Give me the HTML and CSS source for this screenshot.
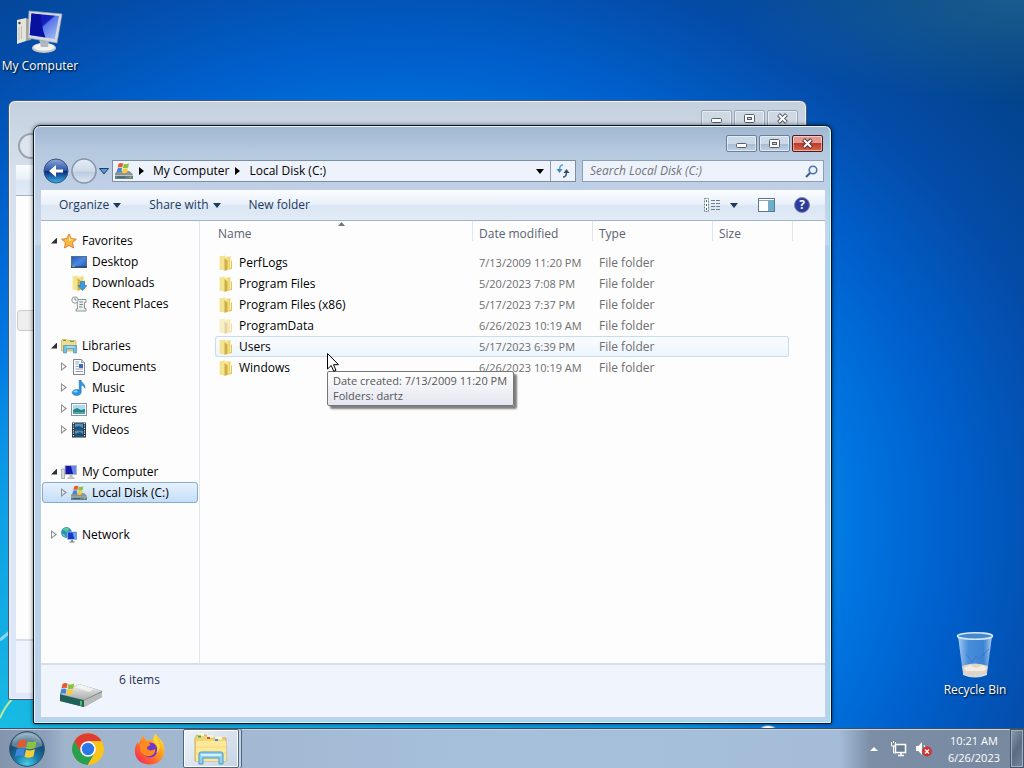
FILE: index.html
```html
<!DOCTYPE html>
<html lang="en">
<head>
  <meta charset="UTF-8">
  <meta name="viewport" content="width=device-width, initial-scale=1.0">
  <title>Local Disk (C:)</title>
  <link rel="stylesheet" href="styles.css">
</head>
<body>
  <!-- Icon sprite -->
  <svg class="sprite" aria-hidden="true">
    <defs>
      <linearGradient id="gScreen" x1="0" y1="0" x2="1" y2="1">
        <stop offset="0" stop-color="#0a14a8"/><stop offset=".45" stop-color="#1420c0"/><stop offset=".5" stop-color="#5a78e8"/><stop offset="1" stop-color="#a8c4fa"/>
      </linearGradient>
      <linearGradient id="gFolder" x1="0" y1="0" x2="1" y2="0">
        <stop offset="0" stop-color="#f8eca0"/><stop offset=".5" stop-color="#f0dc7c"/><stop offset="1" stop-color="#dcc050"/>
      </linearGradient>
      <linearGradient id="gDesk" x1="0" y1="0" x2="1" y2="1">
        <stop offset="0" stop-color="#1c54b8"/><stop offset=".5" stop-color="#4a88e0"/><stop offset="1" stop-color="#2058b8"/>
      </linearGradient>
      <linearGradient id="gGray" x1="0" y1="0" x2="0" y2="1">
        <stop offset="0" stop-color="#f4f4f4"/><stop offset="1" stop-color="#a8acac"/>
      </linearGradient>
      <linearGradient id="gBack" x1="0" y1="0" x2="0" y2="1">
        <stop offset="0" stop-color="#8fa8d8"/><stop offset=".48" stop-color="#2c55a8"/><stop offset=".52" stop-color="#0b2a80"/><stop offset="1" stop-color="#38b8e8"/>
      </linearGradient>
      <linearGradient id="gFwd" x1="0" y1="0" x2="0" y2="1">
        <stop offset="0" stop-color="#e6edf6"/><stop offset=".5" stop-color="#cfdaea"/><stop offset=".55" stop-color="#bccbe0"/><stop offset="1" stop-color="#dfe8f4"/>
      </linearGradient>
      <radialGradient id="gOrb" cx=".5" cy=".95" r=".9">
        <stop offset="0" stop-color="#48d0e8"/><stop offset=".4" stop-color="#1878a8"/><stop offset=".75" stop-color="#174a70"/><stop offset="1" stop-color="#7898b0"/>
      </radialGradient>
      <linearGradient id="gFox" x1="1" y1="0" x2="0" y2="1">
        <stop offset="0" stop-color="#fff04a"/><stop offset=".4" stop-color="#ff9a1e"/><stop offset=".75" stop-color="#ff4a3c"/><stop offset="1" stop-color="#f0186a"/>
      </linearGradient>
      <linearGradient id="gBin" x1="0" y1="0" x2="1" y2="0">
        <stop offset="0" stop-color="#c8e0f8" stop-opacity=".85"/><stop offset=".3" stop-color="#78b0ec" stop-opacity=".6"/><stop offset=".75" stop-color="#78b0ec" stop-opacity=".5"/><stop offset="1" stop-color="#d0e4f8" stop-opacity=".85"/>
      </linearGradient>
    </defs>

    <symbol id="flag" viewBox="0 0 20 18">
      <path d="M3 2.500Q6 .5 9.500 2L8.300 8Q5 6.500 1.500 8.400z" fill="#e8582c"/>
      <path d="M10.500 2.500Q14 4 18 2.200L16.800 8.200Q13 10 9.300 8.400z" fill="#8cc23c"/>
      <path d="M1.300 9.400Q5 7.600 8 9.200L6.900 15Q3.500 13.500 0 15.500z" fill="#3c88d8"/>
      <path d="M9.100 9.600Q13 11 16.600 9.300L15.400 15.300Q11.500 17 7.900 15.500z" fill="#f8cc38"/>
    </symbol>
    <symbol id="drive" viewBox="0 0 16 16">
      <path d="M0 10l2-2h11l3 3v4H0z" fill="#8c9498"/>
      <path d="M0 11.500h16V15H0z" fill="#6c7c80"/>
      <path d="M0 12h16" stroke="#c4ccd0" stroke-width=".8"/>
      <path d="M2 13.500h7" stroke="#2c6878"/><circle cx="13.500" cy="13.500" r=".7" fill="#7ce058"/>
      <use href="#flag" x="1" y="0" width="13" height="11"/>
    </symbol>
    <symbol id="star" viewBox="0 0 16 16">
      <path d="M8 .8l2.200 4.800 5.200.6-3.900 3.500 1.100 5.300L8 12.400 3.400 15l1.100-5.300L.6 6.200l5.200-.6z" fill="#fbb83c" stroke="#d8782c" stroke-width=".9"/>
      <path d="M8 3l1.500 3.400 3 .4L8 8z" fill="#fff0a8"/>
    </symbol>
    <symbol id="desk" viewBox="0 0 16 16">
      <rect x=".5" y="2.500" width="15" height="11" fill="url(#gDesk)" stroke="#5c6c88"/>
      <path d="M0 13h16" stroke="#203050"/><path d="M1 12.300h3" stroke="#58c868"/>
    </symbol>
    <symbol id="folder" viewBox="0 0 16 16">
      <path d="M1 1.500l6-1v15l-6-1z" fill="#f2e492"/>
      <path d="M7 1.500h6v4h1V14l-7 1.500z" fill="url(#gFolder)"/>
      <path d="M6.500 3l3 2.500V15l-3 .8z" fill="#cfae48"/>
      <path d="M1.500 1.800v12.400M12.500 2v11" stroke="#fffad0" stroke-width=".8"/>
    </symbol>
    <symbol id="download" viewBox="0 0 16 16">
      <use href="#folder" x="0" y="0" width="16" height="16"/>
      <path d="M9.500 6.500h4v4H16l-4.500 5L7 10.500h2.500z" fill="#3c9ce0" stroke="#2070b0" stroke-width=".6"/>
    </symbol>
    <symbol id="recent" viewBox="0 0 16 16">
      <path d="M6 3.500h9v3h-1.500v6H15V15H5v-2h1.500z" fill="#eef0f0" stroke="#8c9494"/>
      <path d="M8.500 6h3.500M8.500 8.500h3.500M8 11h3.500" stroke="#78888c"/>
      <circle cx="4" cy="4" r="3.200" fill="#f8f8f8" stroke="#909898"/><path d="M4 2v2h1.500" fill="none" stroke="#606868" stroke-width=".8"/>
    </symbol>
    <symbol id="library" viewBox="0 0 16 16">
      <path d="M.5 2.500l1-1h4l1 1h8l.5 1V13H.5z" fill="#f4dc84" stroke="#c8a850" stroke-width=".7"/>
      <path d="M2 2.500h3M9 3.500h4" stroke="#48a868"/>
      <path d="M2.500 15V7.500h13V15h-3v-4h-7v4z" fill="#6cc0e8" stroke="#3c88b8" stroke-width=".6"/>
      <path d="M5.500 9h8" stroke="#d8f4fc"/>
    </symbol>
    <symbol id="doc" viewBox="0 0 16 16">
      <path d="M2.500.500h8l3 3v12h-11z" fill="#fcfcfc" stroke="#788898"/>
      <path d="M4.500 3h4M4.500 5h3M4.500 7.500h3M4.500 10h7.500M4.500 12.500h7.500" stroke="#90a0b4"/><path d="M8 5h4v4H8z" fill="#3c68c0"/>
      <path d="M10.500.500v3h3" fill="#d0d8e0" stroke="#788898" stroke-width=".7"/>
    </symbol>
    <symbol id="music" viewBox="0 0 16 16">
      <path d="M8.200 0h1.700c.3 3 4.800 4 3.900 8.300-.8-2.200-2-2.800-3.600-3.200V12c0 2.200-1.800 3.500-4.400 3.500S1.200 14.500 1.200 12.600s2-3.200 4.400-3.200c1 0 2 .2 2.600.5z" fill="#2c94e0" stroke="#1c68b0" stroke-width=".5"/>
      <ellipse cx="4.500" cy="11.500" rx="2" ry="1" fill="#98d4f8"/>
    </symbol>
    <symbol id="picture" viewBox="0 0 16 16">
      <rect x=".5" y="2.500" width="15" height="12" fill="#fff" stroke="#8894a0"/>
      <path d="M2 4h12v9H2z" fill="#a8dcec"/><path d="M2 9l4-2 4 2 4-1v5H2z" fill="#2c8088"/><path d="M2 11h12v2H2z" fill="#48a8a8"/>
    </symbol>
    <symbol id="video" viewBox="0 0 16 16">
      <path d="M1 .5h14v15H1z" fill="#202c38"/>
      <path d="M4 1.500h8v6H4zM4 8.500h8v6H4z" fill="#4c94c4"/>
      <path d="M4 5l4-1 4 2v1.500H4zM4 12l5-2 3 2v2.500H4z" fill="#1c5078"/>
      <path d="M2.500 1v14M13.500 1v14" stroke="#e0e8f0" stroke-width="1.400" stroke-dasharray="1.200 1.200"/>
    </symbol>
    <symbol id="pc" viewBox="0 0 16 16">
      <path d="M.5 5h3v9.500h-3z" fill="#d8dcdc" stroke="#909898" stroke-width=".7"/>
      <path d="M4 1.500h11.500v9H4z" fill="#1818a8" stroke="#b0b8c8"/><path d="M10 2h5v8h-3z" fill="#6888e0"/>
      <path d="M8.500 11h3v2h-3zM6.500 13.200h7V15h-7z" fill="#b8bcc0"/>
    </symbol>
    <symbol id="network" viewBox="0 0 16 16">
      <circle cx="5.500" cy="5.500" r="5.400" fill="#2c90c8"/><path d="M2 3c2 0 2 2 4 1.500S7 1 9 2c-2-2-6-1.500-7 1zM1 7c2-1 3 1 4 3-2 0-3-1-4-3z" fill="#58d088"/>
      <path d="M6.500 5h9.300v7.500H6.500z" fill="#1838c8" stroke="#a8c0e0" stroke-width=".8"/><path d="M11.500 5.500h3.800V12h-2z" fill="#68a0f0"/>
      <path d="M10.300 13h1.500v2h-1.500zM8.500 14.600h5v1h-5z" fill="#687888"/>
    </symbol>
    <symbol id="bigpc" viewBox="0 0 48 44">
      <path d="M1 10l9-2v23l-9 3z" fill="#e4e4dc"/><path d="M10 8l5 2v20l-5 1z" fill="#a4a49c"/><circle cx="3.500" cy="13" r="1.200" fill="#3c4c3c"/>
      <path d="M3 17v13M5.500 16v13" stroke="#b8b8b0" stroke-width=".8"/>
      <ellipse cx="28" cy="38" rx="12" ry="5" fill="#c4c8c8"/><ellipse cx="28" cy="37" rx="10.500" ry="3.800" fill="#f0f2f2"/>
      <path d="M23 29l10 2-1 6h-7z" fill="#b0b8bc"/>
      <path d="M13 1l33 3-5 29-29-5z" fill="#d4d9de" stroke="#9ca8b4" stroke-width=".7"/>
      <path d="M15.500 3.500l27.500 2.500-4.200 23-25-4z" fill="url(#gScreen)"/>
      <path d="M15.500 3.500l9 1q1 13 5 23l-15.700-2.500z" fill="#0810a0"/>
    </symbol>
    <symbol id="bigdrive" viewBox="0 0 44 26">
      <path d="M1 12L20 2l23 7v6L25 25 1 19z" fill="#747878"/>
      <path d="M1 12L20 2l23 7-18 9z" fill="url(#gGray)"/><path d="M16 5l6-2 13 4-5 3z" fill="#fafafa" opacity=".7"/>
      <path d="M1 12.500L25 18.500V25L1 19z" fill="#1c6058"/><path d="M25 18.500L43 10v5L25 25z" fill="#b8bcbc"/>
      <path d="M22 19v4.500" stroke="#58e068" stroke-width="1.500"/>
      <use href="#flag" x="1" y="0" width="16" height="14"/>
    </symbol>
    <symbol id="bin" viewBox="0 0 38 46">
      <path d="M2 4l5 38q12 5 24 0l5-38z" fill="url(#gBin)"/>
      <path d="M6 34q13-5 26 0l-1.500 8q-11 4-23 0z" fill="#e0d4c8"/><path d="M8 36l6-3 6 3 7-3 4 3-3 3H10z" fill="#f4ece0"/>
      <path d="M10 22l6 8 4-6 8 6M33 17l-9 9" stroke="#3870b8" fill="none" opacity=".6"/>
      <path d="M7 41q12 5 24 0v2q-12 5-24 0z" fill="#d8dce0"/>
      <ellipse cx="19" cy="4" rx="17.500" ry="3.200" fill="#4888c8" stroke="#d4e8f8" stroke-width="1.600"/>
    </symbol>
    <symbol id="orb" viewBox="0 0 36 36">
      <circle cx="18" cy="18" r="17.300" fill="url(#gOrb)" stroke="#26506c"/>
      <path d="M3 15a15 13 0 0 1 30 0q-15 6-30 0z" fill="#fff" opacity=".3"/>
      <use href="#flag" x="6" y="7" width="24" height="22"/>
    </symbol>
    <symbol id="chrome" viewBox="0 0 32 32">
      <circle cx="16" cy="16" r="15.700" fill="#fbc418"/>
      <path d="M2.400 8.150A15.700 15.700 0 0 1 29.600 8.150H16V16z" fill="#e03c30"/>
      <path d="M2.400 8.150A15.700 15.700 0 0 0 16 31.700L22.800 20 16 16l-6.800 4z" fill="#28a050"/>
      <path d="M2.400 8.150L9.200 20l6.800-4V8z" fill="#e03c30"/>
      <path d="M2.400 8.150L9.200 20 16 24v7.700A15.700 15.700 0 0 1 2.400 8.150z" fill="#28a050"/>
      <path d="M29.600 8.150H16V16l6.800 4L16 31.700A15.700 15.700 0 0 0 29.600 8.150z" fill="#fbc418"/>
      <circle cx="16" cy="16" r="7.800" fill="#fff"/><circle cx="16" cy="16" r="6.200" fill="#2c78e8"/>
    </symbol>
    <symbol id="firefox" viewBox="0 0 32 32">
      <path d="M22 1c1 3 5 5 7 9 4 9 0 21-13 21.500C5 31.500 0 24 1 16c.3-3 1.500-5.500 3-7 0 1 .3 2 .8 2.500C6 7 8 4 10 2.500c0 3 1 4 3 5 3-1 5 0 6 .5-1-3 1-6 3-7z" fill="url(#gFox)"/>
      <circle cx="16" cy="17" r="7.500" fill="#7038c8"/>
      <path d="M6 11c3-3 8-3 10 0 1 2-3 2-3 4 0 3 6 3 8 1 1 5-4 8-8 7-5-1-8-6-7-12z" fill="#ff8a20"/>
      <path d="M20 9c4 3 4 8 2 11 3-2 5-6 3-10-1-3-3-5-3-9-2 2-3 5-2 8z" fill="#ffd838"/>
    </symbol>
    <symbol id="explorer" viewBox="0 0 34 32">
      <path d="M1 5l2-3h9l2 3h18v23H1z" fill="#f0d478" stroke="#c8a448" stroke-width=".8"/>
      <path d="M4 1.500h6M13 3.500h6M21 5h7" stroke="#fcf4cc" stroke-width="3"/>
      <path d="M4 3.500h3" stroke="#38b048" stroke-width="2"/><path d="M13 5h3" stroke="#e05030" stroke-width="2"/><path d="M21 7h3" stroke="#4088d8" stroke-width="2"/>
      <path d="M2 8h30v20H2z" fill="#fbe898"/><path d="M2 14h30M2 20h30" stroke="#f4da80"/>
      <path d="M5 31V21q0-2 2-2h20q2 0 2 2v10h-4v-6H9v6z" fill="#90d0f0" stroke="#4c98c8"/><path d="M7 22h20" stroke="#e8faff" stroke-width="1.500"/>
    </symbol>
  </svg>

  <div class="desktop">
    <svg class="streaks" viewBox="0 0 120 128" aria-hidden="true">
      <path d="M0 40L12 30" stroke="#d4f2fc" stroke-width="3" opacity=".6"/>
      <path d="M0 118Q5 106 14 97" fill="none" stroke="#b4ec98" stroke-width="2"/>
    </svg>

    <a class="shortcut computer" href="#">
      <svg width="48" height="44"><use href="#bigpc"/></svg>
      <span>My Computer</span>
    </a>
    <a class="shortcut recycle" href="#">
      <svg width="38" height="46"><use href="#bin"/></svg>
      <span>Recycle Bin</span>
    </a>

    <!-- Window in the background -->
    <section class="window inactive" aria-label="Background window">
      <div class="titlebar">
        <button class="cap" aria-label="Minimize"><svg width="13" height="11"><rect x="1.500" y="5.500" width="10" height="4" rx="1" fill="#fff" stroke="#56606c"/></svg></button>
        <button class="cap" aria-label="Maximize"><svg width="13" height="11"><rect x="1.500" y="1.500" width="10" height="8" rx="1" fill="#fff" stroke="#56606c"/><rect x="4.500" y="4.500" width="4" height="2" fill="#ccd" stroke="#56606c"/></svg></button>
        <button class="cap" aria-label="Close"><svg width="13" height="11"><path d="M2.500 1.500l8 8M10.500 1.500l-8 8" stroke="#56606c" stroke-width="4"/><path d="M3 2l7 7M10 2L3 9" stroke="#fff" stroke-width="2"/></svg></button>
      </div>
      <div class="navbar">
        <button class="round" aria-label="Back"></button>
      </div>
      <div class="client">
        <div class="toolbar"></div>
        <div class="body"><div class="ghost"></div></div>
        <div class="details"></div>
      </div>
    </section>

    <!-- Explorer window -->
    <main class="window active">
      <div class="titlebar">
        <button class="cap" aria-label="Minimize"><svg width="13" height="11"><rect x="1.500" y="5.500" width="10" height="4" rx="1" fill="#fff" stroke="#56606c"/></svg></button>
        <button class="cap" aria-label="Maximize"><svg width="13" height="11"><rect x="1.500" y="1.500" width="10" height="8" rx="1" fill="#fff" stroke="#56606c"/><rect x="4.500" y="4.500" width="4" height="2" fill="#ccd" stroke="#56606c"/></svg></button>
        <button class="cap close" aria-label="Close"><svg width="13" height="11"><path d="M2.500 1.500l8 8M10.500 1.500l-8 8" stroke="#5c3038" stroke-width="4"/><path d="M3 2l7 7M10 2L3 9" stroke="#fff" stroke-width="2"/></svg></button>
      </div>

      <div class="navbar">
        <div class="history">
          <button class="bare" aria-label="Back"><svg width="26" height="26"><circle cx="13" cy="13" r="12" fill="url(#gBack)" stroke="#3c5078"/><path d="M20 11.500v3h-7v4.500L6 13l7-6v4.500z" fill="#fff"/></svg></button>
          <button class="bare" aria-label="Forward"><svg width="26" height="26"><circle cx="13" cy="13" r="12" fill="url(#gFwd)" stroke="#8494aa" stroke-width="1.500"/></svg></button>
          <button class="bare" aria-label="Recent pages"><svg width="10" height="7"><path d="M.5.500h9L5 6z" fill="#5c98d0" stroke="#1c4068"/></svg></button>
        </div>
        <div class="address">
          <svg width="18" height="18"><use href="#drive"/></svg>
          <svg class="sep" width="5" height="8"><path d="M0 0l5 4-5 4z"/></svg>
          <a href="#">My Computer</a>
          <svg class="sep" width="5" height="8"><path d="M0 0l5 4-5 4z"/></svg>
          <a href="#">Local Disk (C:)</a>
          <button class="bare drop" aria-label="Previous locations"><svg width="8" height="5"><path d="M0 0h8L4 5z"/></svg></button>
          <button class="bare refresh" aria-label="Refresh"><svg width="16" height="16"><path d="M8 2Q4.500 2 4.500 7" fill="none" stroke="#58a4c8" stroke-width="1.500"/><path d="M1.500 6h6l-3 4z" fill="#3c8cb4"/><path d="M8 14q3.500 0 3.500-5" fill="none" stroke="#3c5c80" stroke-width="1.500"/><path d="M8.500 10h6l-3-4z" fill="#2c4c74"/></svg></button>
        </div>
        <div class="search">
          <input type="text" placeholder="Search Local Disk (C:)" aria-label="Search Local Disk (C:)">
          <svg width="13" height="13"><circle cx="8" cy="5" r="3.800" fill="#e8f4fc" stroke="#4c74a8" stroke-width="1.600"/><path d="M5 8l-4 4" stroke="#3c5c90" stroke-width="2"/></svg>
        </div>
      </div>

      <div class="client">
        <div class="toolbar">
          <button>Organize <svg width="8" height="5"><path d="M0 0h8L4 5z" fill="#1e395b"/></svg></button>
          <button>Share with <svg width="8" height="5"><path d="M0 0h8L4 5z" fill="#1e395b"/></svg></button>
          <button>New folder</button>
          <div class="tools">
            <button aria-label="Change your view"><svg width="16" height="14"><path d="M.500.500h4v13h-4z" fill="#fff" stroke="#70808c" stroke-dasharray="2 1"/><path d="M2.500 2v10" stroke="#3c6888" stroke-dasharray="2 2"/><path d="M7 2.500h9M7 5.500h9M7 8.500h9M7 11.500h9" stroke="#70808c" stroke-dasharray="4 1"/></svg></button>
            <button aria-label="More options"><svg width="8" height="5"><path d="M0 0h8L4 5z" fill="#1e395b"/></svg></button>
            <button aria-label="Preview pane"><svg width="17" height="14"><rect x=".5" y=".5" width="16" height="13" fill="#fff" stroke="#5c7890"/><path d="M11 3h5v10h-5z" fill="#68b0d0"/><path d="M1 2.500h15M10.500 3v10" stroke="#8ca4b8"/></svg></button>
            <button class="help" aria-label="Help">?</button>
          </div>
        </div>

        <div class="body">
          <nav class="tree">
            <ul>
              <li class="root open"><i></i><svg width="16" height="16"><use href="#star"/></svg><a href="#">Favorites</a></li>
              <li><svg width="16" height="16"><use href="#desk"/></svg><a href="#">Desktop</a></li>
              <li><svg width="16" height="16"><use href="#download"/></svg><a href="#">Downloads</a></li>
              <li><svg width="16" height="16"><use href="#recent"/></svg><a href="#">Recent Places</a></li>
            </ul>
            <ul>
              <li class="root open"><i></i><svg width="16" height="16"><use href="#library"/></svg><a href="#">Libraries</a></li>
              <li><i></i><svg width="16" height="16"><use href="#doc"/></svg><a href="#">Documents</a></li>
              <li><i></i><svg width="16" height="16"><use href="#music"/></svg><a href="#">Music</a></li>
              <li><i></i><svg width="16" height="16"><use href="#picture"/></svg><a href="#">Pictures</a></li>
              <li><i></i><svg width="16" height="16"><use href="#video"/></svg><a href="#">Videos</a></li>
            </ul>
            <ul>
              <li class="root open"><i></i><svg width="16" height="16"><use href="#pc"/></svg><a href="#">My Computer</a></li>
              <li class="selected"><i></i><svg width="16" height="16"><use href="#drive"/></svg><a href="#">Local Disk (C:)</a></li>
            </ul>
            <ul>
              <li class="root"><i></i><svg width="16" height="16"><use href="#network"/></svg><a href="#">Network</a></li>
            </ul>
          </nav>

          <div class="files">
            <table>
              <thead>
                <tr><th class="name">Name<svg class="sort" width="7" height="4"><path d="M0 4l3.500-4L7 4z"/></svg></th><th class="date">Date modified</th><th class="type">Type</th><th class="size">Size</th></tr>
              </thead>
              <tbody>
                <tr><td><svg width="16" height="16"><use href="#folder"/></svg>PerfLogs</td><td>7/13/2009 11:20 PM</td><td>File folder</td><td></td></tr>
                <tr><td><svg width="16" height="16"><use href="#folder"/></svg>Program Files</td><td>5/20/2023 7:08 PM</td><td>File folder</td><td></td></tr>
                <tr><td><svg width="16" height="16"><use href="#folder"/></svg>Program Files (x86)</td><td>5/17/2023 7:37 PM</td><td>File folder</td><td></td></tr>
                <tr class="hidden-item"><td><svg width="16" height="16"><use href="#folder"/></svg>ProgramData</td><td>6/26/2023 10:19 AM</td><td>File folder</td><td></td></tr>
                <tr class="hover"><td><svg width="16" height="16"><use href="#folder"/></svg>Users</td><td>5/17/2023 6:39 PM</td><td>File folder</td><td></td></tr>
                <tr><td><svg width="16" height="16"><use href="#folder"/></svg>Windows</td><td>6/26/2023 10:19 AM</td><td>File folder</td><td></td></tr>
              </tbody>
            </table>
          </div>
        </div>

        <footer class="details">
          <svg width="44" height="26"><use href="#bigdrive"/></svg>
          <span>6 items</span>
        </footer>
      </div>
    </main>

    <div class="tooltip" role="tooltip">Date created: 7/13/2009 11:20 PM<br>Folders: dartz</div>
    <svg class="cursor" width="12" height="19"><path d="M.5.500v15.500l3.700-3.500 2.600 5.800 2.200-1-2.500-5.600h5z" fill="#fff" stroke="#000"/></svg>
  </div>

  <div class="taskbar">
    <button class="start" aria-label="Start"><svg width="36" height="36"><use href="#orb"/></svg></button>
    <button class="task" aria-label="Google Chrome"><svg width="32" height="32"><use href="#chrome"/></svg></button>
    <button class="task" aria-label="Firefox"><svg width="32" height="32"><use href="#firefox"/></svg></button>
    <button class="task running" aria-label="Windows Explorer"><svg width="34" height="32"><use href="#explorer"/></svg></button>
    <div class="tray">
      <button class="bare" aria-label="Show hidden icons"><svg width="8" height="4"><path d="M0 4l4-4 4 4z" fill="#fff"/></svg></button>
      <svg width="16" height="16"><rect x="4.500" y="3.500" width="10" height="8" fill="#6c7c90" stroke="#fff" stroke-width="1.500"/><path d="M7 14.500h6M10 12v2" stroke="#fff" stroke-width="1.500"/><path d="M.5 1v4h4V1M2.500 0v2M2.500 5v7h2" fill="none" stroke="#fff"/></svg>
      <svg width="18" height="16"><path d="M1 5h2.500L7 1v13l-3.500-4H1z" fill="#fff"/><path d="M9 4q2 3 0 7" fill="none" stroke="#fff"/><circle cx="12" cy="10.500" r="5" fill="#d83030"/><path d="M10 8.500l4 4M14 8.500l-4 4" stroke="#fff" stroke-width="1.500"/></svg>
      <time class="clock">10:21 AM<br>6/26/2023</time>
      <button class="peek" aria-label="Show desktop"></button>
    </div>
  </div>
</body>
</html>
```
FILE: styles.css
```css
* {
  box-sizing: border-box;
}
body {
  margin: 0;
  height: 100vh;
  display: flex;
  flex-direction: column;
  overflow: hidden;
  font-family: "Open Sans", "Noto Sans", sans-serif;
  font-size: 12px;
  line-height: 16px;
  color: #000;
}
svg {
  display: block;
  flex: none;
}
a {
  color: inherit;
  text-decoration: none;
}
button {
  font: inherit;
  color: inherit;
  padding: 0;
  margin: 0;
  border: 0;
  background: none;
}
ul {
  list-style: none;
  margin: 0;
  padding: 0;
}
.sprite {
  position: absolute;
  width: 0;
  height: 0;
}
.bare {
  display: flex;
  align-items: center;
  justify-content: center;
}

/* Desktop */
.desktop {
  position: relative;
  flex: 1;
  background:
    radial-gradient(ellipse 8px 3px at 75% 100%, #fff 50%, transparent),
    radial-gradient(ellipse 28% 14% at 99% 0, rgba(60, 130, 150, 0.4), transparent),
    radial-gradient(ellipse 60% 50% at 0 100%, #18bce4, transparent),
    radial-gradient(ellipse 80% 95% at 39% 72%, #0a98ea 45%, #0074e0 56%, #005fcb 68%, #044ca9 82%, #024288 100%);
}
.streaks {
  position: absolute;
  left: 0;
  bottom: 0;
  width: 120px;
  height: 128px;
}
.shortcut {
  position: absolute;
  display: flex;
  flex-direction: column;
  align-items: center;
  width: 80px;
  color: #fff;
  text-shadow: 1px 1px 2px #000;
}
.computer {
  left: 0;
  top: 10px;
  gap: 4px;
}
.recycle {
  right: 9px;
  bottom: 30px;
  gap: 4px;
}

/* Windows */
.window {
  position: absolute;
  display: flex;
  flex-direction: column;
  padding: 0 6px 6px 7px;
  border: 1px solid #0c1420;
  border-radius: 7px 7px 2px 2px;
}
.inactive {
  left: 8px;
  right: 217px;
  top: 100px;
  bottom: 28px;
  border-color: #48586c;
  background: linear-gradient(#c4d0de, #d6e0ec 70px, #dce6f4 300px, #dfe8f8);
  box-shadow: inset 0 0 0 1px #edf3fa;
}
.active {
  left: 33px;
  right: 192px;
  top: 125px;
  bottom: 4px;
  background: linear-gradient(#9fb7d0, #b4c8de 24px, #bfd0e6 60px, #c8d8ec 118px, #b4cde8 120px, #bcd2ea);
  box-shadow: inset 0 0 0 1px #e4f2fa, inset -2px -2px 0 #8cdcf4, 0 0 4px rgba(0, 0, 0, 0.6);
}
.titlebar {
  display: flex;
  justify-content: flex-end;
  gap: 2px;
  height: 28px;
  padding: 9px 2px 0 0;
}
.cap {
  display: flex;
  align-items: center;
  justify-content: center;
  width: 31px;
  height: 17px;
  border: 1px solid #6b7f99;
  border-radius: 2px;
  background: linear-gradient(#ccd9e8 50%, #a5b9d0 50%, #c2d2e4);
  box-shadow: inset 0 0 0 1px rgba(255, 255, 255, 0.5);
}
.inactive .cap {
  border-color: #98a6b6;
  background: #cfd9e4;
}
.active .close {
  border-color: #4c1a24;
  background: linear-gradient(#e09a90 45%, #bf3a28 50%, #d8684c);
}
.navbar {
  display: flex;
  align-items: center;
  height: 36px;
  padding: 0 1px 2px 2px;
}
.history {
  display: flex;
  align-items: center;
  gap: 2px;
  width: 69px;
}
.round {
  width: 26px;
  height: 26px;
  border: 2px solid #98a2ae;
  border-radius: 50%;
  background: #dce4ee;
}
.address {
  display: flex;
  align-items: center;
  flex: 1;
  height: 22px;
  margin-right: 6px;
  padding-left: 2px;
  border: 1px solid #7c8ea6;
  background: #eef3fb;
}
.sep {
  margin: 0 9px 0 6px;
}
.drop {
  width: 20px;
  height: 20px;
  margin-left: auto;
}
.refresh {
  width: 25px;
  height: 20px;
  border-left: 1px solid #8c9eb6;
}
.search {
  display: flex;
  align-items: center;
  width: 242px;
  height: 22px;
  padding: 0 5px 0 7px;
  border: 1px solid #8c9eb6;
  background: #eef3fb;
}
.search input {
  flex: 1;
  min-width: 0;
  padding: 0;
  border: 0;
  outline: 0;
  background: none;
  font: inherit;
}
.search input::placeholder {
  color: #70747c;
  font-style: italic;
}
.client {
  flex: 1;
  display: flex;
  flex-direction: column;
  min-height: 0;
  background: #fdfdfe;
}

/* Command bar */
.toolbar {
  display: flex;
  align-items: center;
  gap: 28px;
  height: 31px;
  padding: 0 15px 0 18px;
  color: #1e395b;
  border-bottom: 1px solid #a0b4cc;
  background: linear-gradient(#fbfdff, #eaf1fa 45%, #dbe6f4 55%, #e2ecf7);
}
.toolbar button {
  display: flex;
  align-items: center;
  gap: 4px;
}
.tools {
  display: flex;
  align-items: center;
  gap: 19px;
  margin-left: auto;
}
.tools button:nth-child(2) {
  margin: 0 1px 0 -9px;
}
.toolbar .help {
  justify-content: center;
  width: 16px;
  height: 16px;
  border: 1px solid #8088b8;
  border-radius: 50%;
  background: #2c3c98;
  color: #fff;
  font-weight: bold;
}

/* Navigation pane */
.body {
  flex: 1;
  display: flex;
  min-height: 0;
}
.tree {
  width: 159px;
  padding: 9px 1px 0;
  border-right: 1px solid #dfe7f0;
}
.tree ul {
  margin-bottom: 21px;
}
.tree li {
  display: flex;
  align-items: center;
  height: 21px;
  padding-left: 28px;
  border: 1px solid transparent;
  border-radius: 3px;
}
.tree li.root {
  padding-left: 18px;
}
.tree li svg {
  margin-right: 5px;
}
.tree i {
  width: 6px;
  height: 9px;
  margin: 0 4px 0 -10px;
  background: #909090;
  clip-path: polygon(0 0, 100% 50%, 0 100%, 0 0, 1px 2px, 1px 7px, 4px 50%, 1px 2px);
}
.tree .open i {
  width: 6px;
  height: 6px;
  background: #303030;
  clip-path: polygon(100% 0, 100% 100%, 0 100%);
}
.tree .selected {
  border-color: #86aad0;
  background: linear-gradient(#e6f1fc, #c4def8);
}

/* File list */
.files {
  flex: 1;
  min-width: 0;
  padding-left: 15px;
}
table {
  table-layout: fixed;
  width: 574px;
  border-spacing: 0;
}
th {
  position: relative;
  height: 26px;
  padding: 0 0 0 7px;
  font-weight: normal;
  text-align: left;
  color: #5a6270;
}
th::after {
  content: "";
  position: absolute;
  right: -1px;
  top: 0;
  height: 20px;
  border-right: 1px solid #e0e6ee;
}
th:last-child::after {
  right: -4px;
}
th.name {
  width: 257px;
  padding-left: 3px;
}
th.date,
th.type {
  width: 120px;
}
.sort {
  position: absolute;
  top: 1px;
  left: 123px;
  fill: #707880;
}
thead::after {
  content: "";
  display: block;
  height: 5px;
}
td {
  height: 21px;
  padding: 0 0 0 7px;
  border: solid transparent;
  border-width: 1px 0;
  color: #6d6d6d;
  white-space: nowrap;
}
td:first-child {
  display: flex;
  align-items: center;
  gap: 5px;
  padding-left: 2px;
  border-left-width: 1px;
  color: #000;
}
td:nth-child(2) {
  font-size: 11px;
}
td:last-child {
  border-right-width: 1px;
}
.hidden-item svg {
  opacity: 0.5;
}
.hover td {
  border-color: #c8dcf0;
  background: linear-gradient(#fafcfe, #edf5fd);
}
.hover td:first-child {
  border-radius: 3px 0 0 3px;
}
.hover td:last-child {
  border-radius: 0 3px 3px 0;
}

/* Details pane */
.details {
  display: flex;
  gap: 16px;
  height: 54px;
  padding: 7px 18px;
  border-top: 2px solid #d4dfea;
  background: #f0f4fd;
  color: #26334d;
}
.details svg {
  margin-top: 10px;
}
.ghost {
  width: 24px;
  height: 21px;
  margin: 114px 0 0 1px;
  border: 1px solid #ccc;
  border-radius: 3px;
  background: #eee;
}

.tooltip {
  position: absolute;
  left: 327px;
  top: 371px;
  padding: 1px 6px 2px 5px;
  border: 1px solid #767676;
  border-radius: 2px;
  background: linear-gradient(#fff, #e4e5f0);
  box-shadow: 3px 3px 2px rgba(0, 0, 0, 0.5);
  color: #575757;
  font-size: 11px;
  line-height: 15px;
}
.cursor {
  position: absolute;
  left: 327px;
  top: 353px;
}

/* Taskbar */
.taskbar {
  display: flex;
  align-items: center;
  height: 40px;
  padding-left: 9px;
  border-top: 1px solid #3c5064;
  box-shadow: inset 0 1px 0 #c4d4e4;
  background: linear-gradient(90deg, #8295ac, #8c9fb8 45px, #a0b4cc 65px, #a6c0dc 50%, #a4bcd8 82%, #7b8ea6 85%, #76899f);
}
.task {
  display: flex;
  align-items: center;
  justify-content: center;
  width: 62px;
}
.start {
  margin-right: 12px;
}
.running {
  width: 56px;
  height: 39px;
  margin-left: 2px;
  border: 1px solid #50657c;
  border-radius: 2px;
  background: linear-gradient(135deg, #eef3f8, #c6d4e4);
  box-shadow: inset 0 0 0 1px #fff, 2px 0 0 #c4d4e4, 3px 0 0 #50657c;
}
.tray {
  display: flex;
  align-items: center;
  gap: 8px;
  margin-left: auto;
  color: #fff;
}
.tray .bare {
  margin-right: 5px;
}
.clock {
  margin: 0 2px 0 7px;
  text-align: center;
  font-size: 11px;
  line-height: 17px;
}
.peek {
  width: 14px;
  height: 39px;
  border: 1px solid #44566c;
  box-shadow: inset 0 0 0 1px #a0b0c0;
  background: linear-gradient(120deg, #8c9cac, #5c6c80 50%, #74869a);
}
```
